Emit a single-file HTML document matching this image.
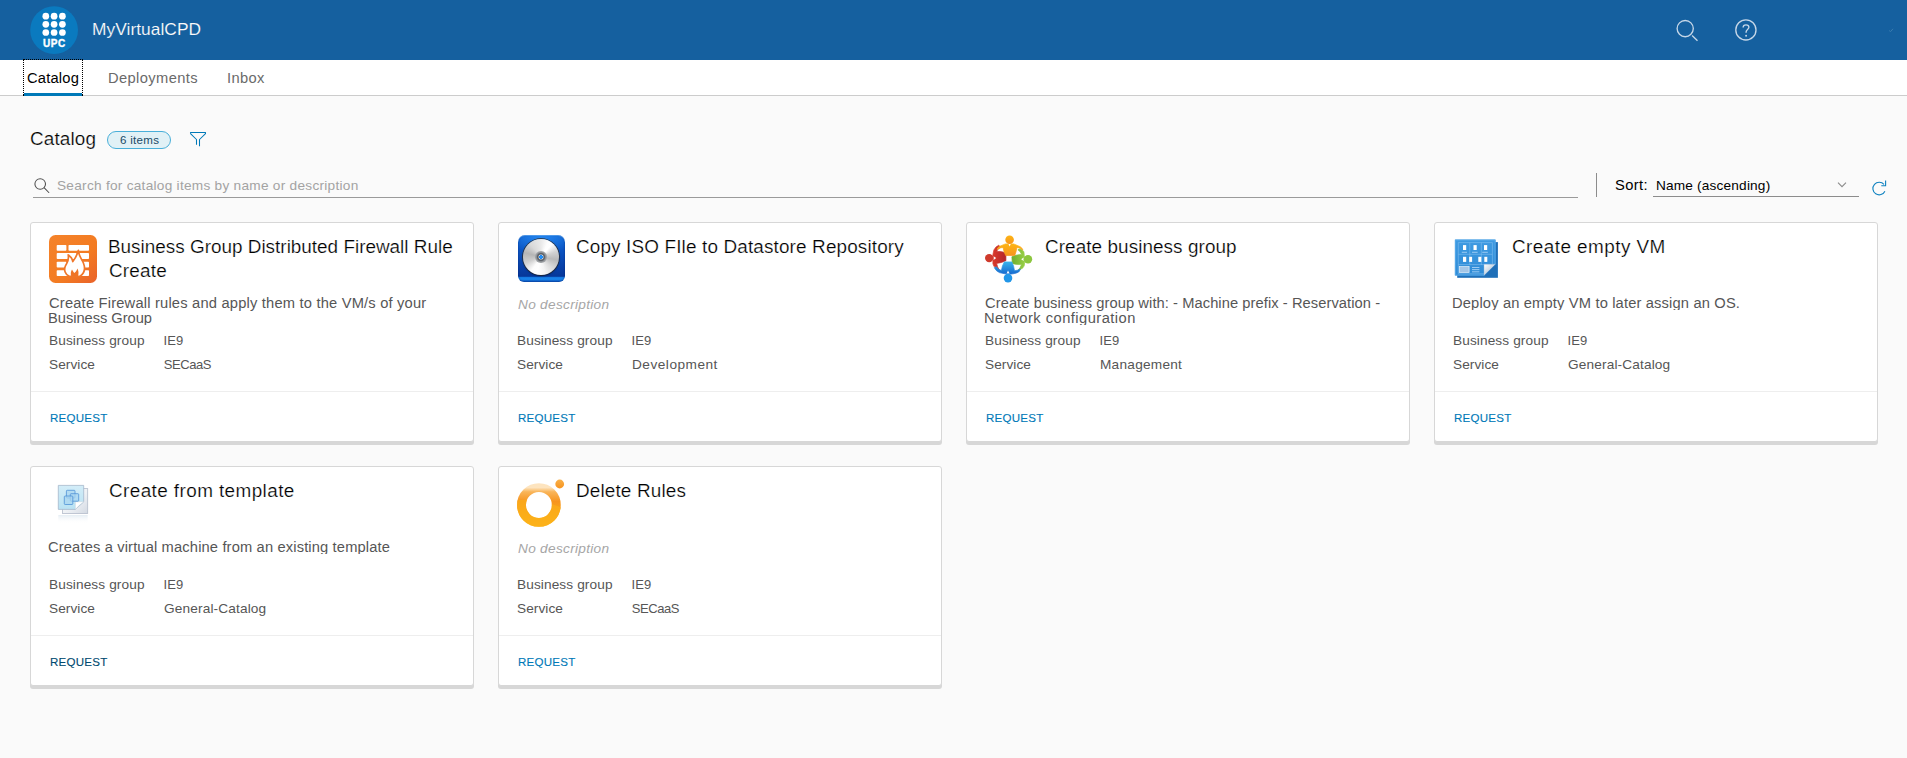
<!DOCTYPE html>
<html lang="en"><head><meta charset="utf-8"><title>MyVirtualCPD</title>
<style>
html,body{margin:0;padding:0}
body{width:1907px;height:758px;overflow:hidden;background:#fafafa;position:relative;font-family:"Liberation Sans",sans-serif}
.a{position:absolute}
.t{position:absolute;white-space:pre;line-height:1;font-family:"Liberation Sans",sans-serif}
.hdr{left:0;top:0;width:1907px;height:60px;background:#15609f}
.nav{left:0;top:60px;width:1907px;height:35px;background:#fff;border-bottom:1px solid #cccccc}
.card{position:absolute;width:442px;height:218px;background:#fff;border:1px solid #d7d7d7;border-radius:3px;box-shadow:0 3px 0 0 #d7d7d7}
.card i{position:absolute;left:0;top:168px;width:442px;height:1px;background:#eeeeee}
.clip{position:absolute;overflow:hidden}
</style></head><body>
<div class="a hdr"></div>
<div class="a nav"></div>
<!-- active tab -->
<div class="a" style="left:24px;top:93px;width:58px;height:3px;background:#0079b8"></div>
<div class="a" style="left:23px;top:59px;width:58px;height:35px;border:1px dotted #000;border-bottom:none"></div>
<div class="a" style="left:23px;top:95px;width:1px;height:1px;background:#000"></div>
<div class="a" style="left:82px;top:95px;width:1px;height:1px;background:#000"></div>
<!-- badge -->
<div class="a" style="left:107px;top:131px;width:62px;height:16px;border:1px solid #49afd9;border-radius:9px;background:#e1f1f6"></div>
<!-- search underline, divider, select underline -->
<div class="a" style="left:33px;top:197px;width:1545px;height:1px;background:#9a9a9a"></div>
<div class="a" style="left:1596px;top:173px;width:1px;height:24px;background:#8c8c8c"></div>
<div class="a" style="left:1653px;top:196px;width:206px;height:1px;background:#8c8c8c"></div>

<div class="card" style="left:30px;top:222px"><i></i></div>
<div class="card" style="left:498px;top:222px"><i></i></div>
<div class="card" style="left:966px;top:222px"><i></i></div>
<div class="card" style="left:1434px;top:222px"><i></i></div>
<div class="card" style="left:30px;top:466px"><i></i></div>
<div class="card" style="left:498px;top:466px"><i></i></div>
<div class="t" style="left:91.61px;top:21px;font-size:16.5px;letter-spacing:0.049px;color:#fafafa;-webkit-text-stroke:0.12px #15609f;transform-origin:0 0;transform:scaleX(1.05);">MyVirtualCPD</div>
<div class="t" style="left:26.57px;top:71px;font-size:14px;letter-spacing:0.192px;color:#000;transform-origin:0 0;transform:scaleX(1.05);">Catalog</div>
<div class="t" style="left:107.62px;top:71px;font-size:14px;letter-spacing:0.357px;color:#6a6a6a;transform-origin:0 0;transform:scaleX(1.05);">Deployments</div>
<div class="t" style="left:226.68px;top:71px;font-size:14px;letter-spacing:0.327px;color:#6a6a6a;transform-origin:0 0;transform:scaleX(1.05);">Inbox</div>
<div class="t" style="left:29.53px;top:130px;font-size:18px;letter-spacing:0.127px;color:#000;-webkit-text-stroke:0.22px #fafafa;transform-origin:0 0;transform:scaleX(1.05);">Catalog</div>
<div class="t" style="left:119.6px;top:134.9px;font-size:11px;letter-spacing:0.284px;color:#1a4a66;transform-origin:0 0;transform:scaleX(1.05);">6 items</div>
<div class="t" style="left:56.57px;top:178.9px;font-size:13px;letter-spacing:0.252px;color:#a3a3a3;transform-origin:0 0;transform:scaleX(1.05);">Search for catalog items by name or description</div>
<div class="t" style="left:1614.54px;top:177.9px;font-size:14px;letter-spacing:0.389px;color:#000;transform-origin:0 0;transform:scaleX(1.05);">Sort:</div>
<div class="t" style="left:1656.08px;top:178.9px;font-size:13px;letter-spacing:0.168px;color:#000;transform-origin:0 0;transform:scaleX(1.05);">Name (ascending)</div>
<div class="t" style="left:107.66px;top:238.3px;font-size:18px;letter-spacing:0.003px;color:#000;-webkit-text-stroke:0.22px #fff;transform-origin:0 0;transform:scaleX(1.05);">Business Group Distributed Firewall Rule</div>
<div class="t" style="left:108.53px;top:262.3px;font-size:18px;letter-spacing:0.201px;color:#000;-webkit-text-stroke:0.22px #fff;transform-origin:0 0;transform:scaleX(1.05);">Create</div>
<div class="t" style="left:48.67px;top:295.8px;font-size:14px;letter-spacing:0.18px;color:#565656;transform-origin:0 0;transform:scaleX(1.05);">Create Firewall rules and apply them to the VM/s of your</div>
<div class="t" style="left:47.62px;top:310.8px;font-size:14px;letter-spacing:-0.041px;color:#565656;overflow:hidden;height:14.5px;transform-origin:0 0;transform:scaleX(1.05);">Business Group</div>
<div class="t" style="left:48.68px;top:334px;font-size:13px;letter-spacing:0.101px;color:#565656;transform-origin:0 0;transform:scaleX(1.05);">Business group</div>
<div class="t" style="left:163.54px;top:334px;font-size:13px;letter-spacing:0.1px;color:#565656;">IE9</div>
<div class="t" style="left:48.57px;top:358px;font-size:13px;letter-spacing:0.068px;color:#565656;transform-origin:0 0;transform:scaleX(1.05);">Service</div>
<div class="t" style="left:163.76px;top:358px;font-size:13px;letter-spacing:-0.431px;color:#565656;">SECaaS</div>
<div class="t" style="left:49.57px;top:412.9px;font-size:11px;letter-spacing:0.219px;color:#0079b8;-webkit-text-stroke:0.12px #0079b8;transform-origin:0 0;transform:scaleX(1.05);">REQUEST</div>
<div class="t" style="left:575.73px;top:238.3px;font-size:18px;letter-spacing:0.139px;color:#000;-webkit-text-stroke:0.22px #fff;transform-origin:0 0;transform:scaleX(1.05);">Copy ISO FIle to Datastore Repository</div>
<div class="t" style="left:517.69px;top:298.1px;font-size:13px;letter-spacing:0.279px;color:#a6a6a6;font-style:italic;transform-origin:0 0;transform:scaleX(1.05);">No description</div>
<div class="t" style="left:516.68px;top:334px;font-size:13px;letter-spacing:0.101px;color:#565656;transform-origin:0 0;transform:scaleX(1.05);">Business group</div>
<div class="t" style="left:631.54px;top:334px;font-size:13px;letter-spacing:0.1px;color:#565656;">IE9</div>
<div class="t" style="left:516.57px;top:358px;font-size:13px;letter-spacing:0.068px;color:#565656;transform-origin:0 0;transform:scaleX(1.05);">Service</div>
<div class="t" style="left:631.68px;top:358px;font-size:13px;letter-spacing:0.472px;color:#565656;transform-origin:0 0;transform:scaleX(1.05);">Development</div>
<div class="t" style="left:517.57px;top:412.9px;font-size:11px;letter-spacing:0.219px;color:#0079b8;-webkit-text-stroke:0.12px #0079b8;transform-origin:0 0;transform:scaleX(1.05);">REQUEST</div>
<div class="t" style="left:1044.53px;top:238.3px;font-size:18px;letter-spacing:0.068px;color:#000;-webkit-text-stroke:0.22px #fff;transform-origin:0 0;transform:scaleX(1.05);">Create business group</div>
<div class="t" style="left:984.67px;top:295.8px;font-size:14px;letter-spacing:0.06px;color:#565656;transform-origin:0 0;transform:scaleX(1.05);">Create business group with: - Machine prefix - Reservation -</div>
<div class="t" style="left:983.62px;top:310.8px;font-size:14px;letter-spacing:0.44px;color:#565656;overflow:hidden;height:14.5px;transform-origin:0 0;transform:scaleX(1.05);">Network configuration</div>
<div class="t" style="left:984.68px;top:334px;font-size:13px;letter-spacing:0.101px;color:#565656;transform-origin:0 0;transform:scaleX(1.05);">Business group</div>
<div class="t" style="left:1099.54px;top:334px;font-size:13px;letter-spacing:0.1px;color:#565656;">IE9</div>
<div class="t" style="left:984.57px;top:358px;font-size:13px;letter-spacing:0.068px;color:#565656;transform-origin:0 0;transform:scaleX(1.05);">Service</div>
<div class="t" style="left:1099.68px;top:358px;font-size:13px;letter-spacing:0.237px;color:#565656;transform-origin:0 0;transform:scaleX(1.05);">Management</div>
<div class="t" style="left:985.57px;top:412.9px;font-size:11px;letter-spacing:0.219px;color:#0079b8;-webkit-text-stroke:0.12px #0079b8;transform-origin:0 0;transform:scaleX(1.05);">REQUEST</div>
<div class="t" style="left:1511.73px;top:238.3px;font-size:18px;letter-spacing:0.428px;color:#000;-webkit-text-stroke:0.22px #fff;transform-origin:0 0;transform:scaleX(1.05);">Create empty VM</div>
<div class="t" style="left:1451.82px;top:295.8px;font-size:14px;letter-spacing:0.144px;color:#565656;overflow:hidden;height:14.5px;transform-origin:0 0;transform:scaleX(1.05);">Deploy an empty VM to later assign an OS.</div>
<div class="t" style="left:1452.68px;top:334px;font-size:13px;letter-spacing:0.101px;color:#565656;transform-origin:0 0;transform:scaleX(1.05);">Business group</div>
<div class="t" style="left:1567.54px;top:334px;font-size:13px;letter-spacing:0.1px;color:#565656;">IE9</div>
<div class="t" style="left:1452.57px;top:358px;font-size:13px;letter-spacing:0.068px;color:#565656;transform-origin:0 0;transform:scaleX(1.05);">Service</div>
<div class="t" style="left:1567.53px;top:358px;font-size:13px;letter-spacing:0.138px;color:#565656;transform-origin:0 0;transform:scaleX(1.05);">General-Catalog</div>
<div class="t" style="left:1453.57px;top:412.9px;font-size:11px;letter-spacing:0.219px;color:#0079b8;-webkit-text-stroke:0.12px #0079b8;transform-origin:0 0;transform:scaleX(1.05);">REQUEST</div>
<div class="t" style="left:108.53px;top:482.3px;font-size:18px;letter-spacing:0.391px;color:#000;-webkit-text-stroke:0.22px #fff;transform-origin:0 0;transform:scaleX(1.05);">Create from template</div>
<div class="t" style="left:47.67px;top:539.8px;font-size:14px;letter-spacing:0.133px;color:#565656;overflow:hidden;height:14.5px;transform-origin:0 0;transform:scaleX(1.05);">Creates a virtual machine from an existing template</div>
<div class="t" style="left:48.68px;top:578px;font-size:13px;letter-spacing:0.101px;color:#565656;transform-origin:0 0;transform:scaleX(1.05);">Business group</div>
<div class="t" style="left:163.54px;top:578px;font-size:13px;letter-spacing:0.1px;color:#565656;">IE9</div>
<div class="t" style="left:48.57px;top:602px;font-size:13px;letter-spacing:0.068px;color:#565656;transform-origin:0 0;transform:scaleX(1.05);">Service</div>
<div class="t" style="left:163.53px;top:602px;font-size:13px;letter-spacing:0.138px;color:#565656;transform-origin:0 0;transform:scaleX(1.05);">General-Catalog</div>
<div class="t" style="left:49.57px;top:656.9px;font-size:11px;letter-spacing:0.219px;color:#004a70;-webkit-text-stroke:0.12px #004a70;transform-origin:0 0;transform:scaleX(1.05);">REQUEST</div>
<div class="t" style="left:575.66px;top:482.3px;font-size:18px;letter-spacing:0.142px;color:#000;-webkit-text-stroke:0.22px #fff;transform-origin:0 0;transform:scaleX(1.05);">Delete Rules</div>
<div class="t" style="left:517.69px;top:542.1px;font-size:13px;letter-spacing:0.279px;color:#a6a6a6;font-style:italic;transform-origin:0 0;transform:scaleX(1.05);">No description</div>
<div class="t" style="left:516.68px;top:578px;font-size:13px;letter-spacing:0.101px;color:#565656;transform-origin:0 0;transform:scaleX(1.05);">Business group</div>
<div class="t" style="left:631.54px;top:578px;font-size:13px;letter-spacing:0.1px;color:#565656;">IE9</div>
<div class="t" style="left:516.57px;top:602px;font-size:13px;letter-spacing:0.068px;color:#565656;transform-origin:0 0;transform:scaleX(1.05);">Service</div>
<div class="t" style="left:631.76px;top:602px;font-size:13px;letter-spacing:-0.431px;color:#565656;">SECaaS</div>
<div class="t" style="left:517.57px;top:656.9px;font-size:11px;letter-spacing:0.219px;color:#0079b8;-webkit-text-stroke:0.12px #0079b8;transform-origin:0 0;transform:scaleX(1.05);">REQUEST</div>
<!-- logo -->
<svg class="a" style="left:24px;top:0" width="60" height="60" viewBox="0 0 60 60">
<circle cx="30.1" cy="30.1" r="23.9" fill="#0a7abf"/>
<g fill="#fff">
<circle cx="21.8" cy="16.2" r="3.35"/><circle cx="30.1" cy="16.2" r="3.35"/><circle cx="38.4" cy="16.2" r="3.35"/>
<circle cx="21.8" cy="24.3" r="3.35"/><circle cx="30.1" cy="24.3" r="3.35"/><circle cx="38.4" cy="24.3" r="3.35"/>
<circle cx="21.8" cy="32.5" r="3.35"/><circle cx="30.1" cy="32.5" r="3.35"/><circle cx="38.4" cy="32.5" r="3.35"/>
</g>
<text x="30.4" y="46.7" text-anchor="middle" style="font-family:'Liberation Sans',sans-serif;font-weight:700;font-size:10px;letter-spacing:0.6px" fill="#fff" stroke="#fff" stroke-width="0.35">UPC</text>
</svg>
<!-- header search + help -->
<svg class="a" style="left:1670px;top:14px" width="100" height="34" viewBox="1670 14 100 34" fill="none" stroke="#c6d7e8" stroke-width="1.35">
<circle cx="1685.2" cy="28.6" r="8.1"/><path d="M1692.1 35.6 L1697.5 40.7"/>
<circle cx="1745.9" cy="29.9" r="10.1"/>
<path d="M1743.1 27.6 C1743.1 25.7 1744.4 24.9 1746 24.9 C1747.7 24.9 1748.9 25.9 1748.9 27.3 C1748.9 29.4 1746.1 29.6 1746.1 31.9 V32.7"/>
<circle cx="1746.1" cy="35.7" r="0.95" fill="#c6d7e8" stroke="none"/>
</svg>
<svg class="a" style="left:1886px;top:26px" width="10" height="8" viewBox="0 0 10 8" fill="none" stroke="#3a7cb0" stroke-width="1"><path d="M3.2 4.6 L4.6 5.6 L7 2.8"/></svg>
<!-- filter -->
<svg class="a" style="left:186px;top:128px" width="24" height="22" viewBox="186 128 24 22" fill="none" stroke="#0079b8" stroke-width="1.05">
<path d="M190.5 133.6 V132.5 H205.5 V133.6 L199.5 139.5 V146.2 M190.5 133.6 L196.5 139.5 V144.8" stroke-linejoin="round"/>
</svg>
<!-- search gray -->
<svg class="a" style="left:30px;top:174px" width="24" height="24" viewBox="30 174 24 24" fill="none" stroke="#4d4d4d" stroke-width="1.05">
<circle cx="40.2" cy="184" r="5.3"/><path d="M44.3 187.9 L48.8 192.5" stroke-linecap="round"/>
</svg>
<!-- select caret + refresh -->
<svg class="a" style="left:1834px;top:176px" width="60" height="24" viewBox="1834 176 60 24" fill="none">
<path d="M1838 182.6 L1842 186.7 L1846 182.6" stroke="#8a8a8a" stroke-width="1.05"/>
<path d="M1884.0 184.45 A6.3 6.3 0 1 0 1884.9 191.2" stroke="#0f82c0" stroke-width="1.1"/>
<path d="M1885.6 180.4 V185.7 H1881.3" stroke="#0f82c0" stroke-width="1.1"/>
</svg>

<!-- firewall icon -->
<svg class="a" style="left:49px;top:235px" width="48" height="48" viewBox="0 0 48 48">
<defs><linearGradient id="fw" x1="0" y1="0" x2="1" y2="1"><stop offset="0" stop-color="#f5832a"/><stop offset="0.6" stop-color="#f37b22"/><stop offset="1" stop-color="#e9622a"/></linearGradient></defs>
<rect x="0" y="0" width="48" height="48" rx="6.5" fill="url(#fw)"/>
<g fill="#fff">
<rect x="7.7" y="9.9" width="9.7" height="5.8" rx="0.8"/><rect x="19.5" y="9.9" width="20.5" height="5.8" rx="0.8"/>
<rect x="7.7" y="18.1" width="20" height="5.9" rx="0.8"/><rect x="30.3" y="18.1" width="9.7" height="5.9" rx="0.8"/>
<rect x="7.7" y="26.8" width="10" height="5.8" rx="0.8"/><rect x="19.5" y="26.8" width="20.5" height="5.8" rx="0.8"/>
<rect x="7.7" y="35.2" width="20" height="5.9" rx="0.8"/><rect x="30.3" y="35.2" width="9.7" height="5.9" rx="0.8"/>
</g>
<path d="M29.4 15.4 C29.2 20 32.6 23.6 34.4 28 C36.6 33.6 35 38.6 31 41.3 L20.2 41.3 C16.2 39.4 14.6 35 16.4 31 C17.8 28 20.4 25.6 19.2 19.9 C21.8 21.4 23.4 24 23.8 26.6 C26.2 23.4 28.2 20 29.4 15.4 Z" fill="#fff" stroke="#f0772a" stroke-width="1.7" stroke-linejoin="round"/>
<path d="M22.4 41.6 C21.2 38.7 21.9 36.2 23 34.4 C23.6 35.4 24.4 36.6 25.2 37.9 C26.6 37.2 27.8 35.6 28.3 33.5 C29.4 35.4 30.2 38.2 28.8 41.6 Z" fill="#ef7426"/>
</svg>

<!-- cd icon -->
<div class="a" style="left:517.5px;top:234.7px;width:47px;height:47.5px;border-radius:7px 7px 6px 6px;background:radial-gradient(ellipse 70% 40% at 50% 0%,rgba(45,150,255,.75),rgba(45,150,255,0) 100%),linear-gradient(180deg,#0f62cf 0%,#0b55c4 30%,#083fa6 70%,#06379a 88%,#1478e0 89.5%,#1a86ee 94%,#0a4db4 100%);box-shadow:inset 0 1px 0 rgba(120,190,255,.55), inset 0 0 2px rgba(0,20,90,.6)"></div>
<div class="a" style="left:523px;top:238.8px;width:36.2px;height:36.2px;border-radius:50%;background:conic-gradient(from 0deg,#e9e9e9 0deg,#fdfdfd 25deg,#ffffff 40deg,#d2d2d2 70deg,#b9b9b9 100deg,#dcdcdc 135deg,#f4f4f4 165deg,#ffffff 195deg,#fdfdfd 215deg,#cfcfcf 250deg,#b5b5b5 285deg,#d9d9d9 320deg,#e9e9e9 360deg);box-shadow:0 0 0 0.8px #2b2b2b, 0 1px 2px rgba(0,0,0,.5)"></div>
<div class="a" style="left:535.4px;top:251.2px;width:11.4px;height:11.4px;border-radius:50%;background:radial-gradient(circle,#2a9bff 0,#1c86f0 1.6px,#d8e6f5 2px,#6f747a 2.8px,#5c6066 3.6px,#8e9296 4.6px,#a4a7aa 5.7px)"></div>

<!-- people icon -->
<svg class="a" style="left:985px;top:235px" width="48" height="48" viewBox="0 0 48 48">
<defs>
<linearGradient id="po" x1="0" y1="0" x2="0" y2="1"><stop offset="0" stop-color="#fdb515"/><stop offset="1" stop-color="#f7941d"/></linearGradient>
<linearGradient id="pr" x1="0" y1="0" x2="1" y2="0"><stop offset="0" stop-color="#d93a2b"/><stop offset="1" stop-color="#b3242a"/></linearGradient>
<linearGradient id="pg" x1="0" y1="0" x2="1" y2="0"><stop offset="0" stop-color="#6fae2e"/><stop offset="1" stop-color="#97cf46"/></linearGradient>
<linearGradient id="pb" x1="0" y1="0" x2="0" y2="1"><stop offset="0" stop-color="#37b2ea"/><stop offset="1" stop-color="#1669cf"/></linearGradient>
</defs>
<g stroke-linejoin="round" stroke-width="0.7">
<path d="M7.9 19.5 L8.9 14.9 Q10.6 11.6 13.7 10.3 L15.6 12.2 Q12.6 13.6 11.6 16.6 Q16.5 15.8 20.9 18.0 L20.9 25.7 Q16.5 27.9 11.6 28.4 Q12.4 31.8 13.9 34.5 L11.2 33.6 Q8.4 31.4 7.9 28.8 Z" fill="url(#pr)" stroke="url(#pr)"/>
<path d="M39.3 20.5 L38.9 16.8 Q37.4 14.4 34.9 13.9 L32.9 14.8 Q35.6 16.4 36.6 19.4 Q31.4 19.6 26.9 21.7 L27.3 28.5 Q31.6 29.9 36.6 29.3 Q35.6 32.6 33 35.4 L35.6 34.3 Q38.6 33 39.3 30.6 L39.6 27.4 Z" fill="url(#pg)" stroke="url(#pg)"/>
<path d="M19.9 38.8 L14.4 37.6 Q11 36 9.3 32.7 L11.2 31.8 Q13.4 34.6 16.4 35.6 Q17 30.6 19.3 26.9 L26.9 26.9 Q28.9 30.8 29.5 35.8 Q32.4 35.4 35.4 34 L34.3 36.4 Q32.4 38 29.6 38.5 L26.1 39.1 Z" fill="url(#pb)" stroke="url(#pb)"/>
<path d="M20.4 8.9 L14.4 11.4 Q12.6 12.4 12.1 14.4 Q15 12.6 18.0 12.4 Q18.8 17 20.7 20.5 L29.8 20.5 Q31.2 16.8 32.0 12.4 Q35 12.8 38 15.1 Q37.2 12.8 35.2 11.7 L28.7 8.9 Z" fill="url(#po)" stroke="url(#po)"/>
</g>
<path d="M23.4 8.7 L24.6 11.6 L25.9 8.7 Z" fill="#fff"/>
<path d="M8.6 21.2 L11.2 23.1 L8.6 24.9 Z M38.6 22.6 L36.2 24.3 L38.6 26 Z M21.6 38.4 L23 35.6 L24.6 38.4 Z" fill="#fff"/>
<circle cx="24.6" cy="4.8" r="4.3" fill="url(#po)"/>
<circle cx="4.2" cy="23.1" r="4.2" fill="#cf3a2c"/>
<circle cx="43" cy="24.2" r="4.2" fill="#8cc63f"/>
<circle cx="23" cy="43.1" r="4.3" fill="#2196e8"/>
</svg>

<!-- blueprint icon -->
<svg class="a" style="left:1450px;top:235px" width="52" height="48" viewBox="1450 235 52 48">
<defs>
<linearGradient id="bp" x1="0" y1="0" x2="0" y2="1"><stop offset="0" stop-color="#3f9be2"/><stop offset="1" stop-color="#2f8bd6"/></linearGradient>
<linearGradient id="bf" x1="0" y1="0" x2="1" y2="1"><stop offset="0" stop-color="#ffffff"/><stop offset="0.5" stop-color="#c9d6e3"/><stop offset="0.5" stop-color="#1f6fb8"/></linearGradient>
</defs>
<rect x="1457.2" y="242.1" width="40.7" height="35.7" fill="#1f6fb8"/>
<path d="M1454.9 239.6 H1495.6 V264.2 L1484 275.6 H1454.9 Z" fill="url(#bp)"/>
<path d="M1455.4 240.1 H1495.1 V264 M1455.4 240.1 V275.1 H1484" fill="none" stroke="#58aaea" stroke-width="0.9"/>
<path d="M1458.3 242.6 H1492.4 V264 M1458.3 242.6 V273.8 H1484 M1458.3 254.3 H1492.4 M1469.8 242.6 V265 M1481.3 242.6 V265 M1458.3 264.6 H1484" fill="none" stroke="#7dbdf0" stroke-width="0.7" opacity="0.85"/>
<g fill="#fff">
<rect x="1463" y="245.1" width="3.2" height="4.9"/><rect x="1473.5" y="245.1" width="3.2" height="4.9"/><rect x="1484" y="245.1" width="3.2" height="4.9"/>
<rect x="1463" y="256.8" width="3.2" height="5.1"/><rect x="1469.2" y="256.8" width="2.9" height="5.1"/><rect x="1478.3" y="256.8" width="3" height="5.1"/><rect x="1484.3" y="256.8" width="3" height="5.1"/>
</g>
<g fill="#a7d1f5"><rect x="1461.8" y="251.8" width="5.2" height="0.9"/><rect x="1472" y="251.8" width="5.6" height="0.9"/><rect x="1482.2" y="251.8" width="5.6" height="0.9"/>
<rect x="1472" y="267" width="7.4" height="0.9"/><rect x="1472" y="269.2" width="7.4" height="0.9"/><rect x="1472" y="271.4" width="7.4" height="0.9"/></g>
<rect x="1459.3" y="266.6" width="9.8" height="5.9" fill="#a5c6e6" stroke="#e6f1fb" stroke-width="0.7"/>
<path d="M1484 264.2 H1495.6 L1484 275.6 Z" fill="url(#bf)"/>
<path d="M1484 264.2 H1495.6 L1484 275.6 Z" fill="none" stroke="#8fb7dc" stroke-width="0.4"/>
</svg>

<!-- template icon -->
<svg class="a" style="left:49px;top:479px" width="48" height="48" viewBox="49 479 48 48">
<defs>
<linearGradient id="tb" x1="0" y1="0" x2="1" y2="1"><stop offset="0" stop-color="#ffffff"/><stop offset="0.55" stop-color="#eef1f5"/><stop offset="1" stop-color="#d3d9e2"/></linearGradient>
<linearGradient id="tm" x1="0" y1="0" x2="0" y2="1"><stop offset="0" stop-color="#d3edf8"/><stop offset="1" stop-color="#b9e2f3"/></linearGradient>
<linearGradient id="tf" x1="0" y1="0" x2="1" y2="1"><stop offset="0" stop-color="#ffffff"/><stop offset="0.5" stop-color="#e4e8ee"/><stop offset="0.52" stop-color="#d5dae3" stop-opacity="0"/></linearGradient>
<linearGradient id="tr" x1="0" y1="0" x2="0" y2="1"><stop offset="0" stop-color="#dfe9f1" stop-opacity="0.8"/><stop offset="1" stop-color="#ffffff" stop-opacity="0"/></linearGradient>
</defs>
<rect x="62.4" y="488.6" width="25.3" height="25" fill="url(#tb)" stroke="#b4bccb" stroke-width="0.8"/>
<path d="M58.3 485.4 H83.7 V501.8 L75.4 509.4 H58.3 Z" fill="url(#tm)" stroke="#a4b7cb" stroke-width="0.8"/>
<path d="M75.4 501.8 H83.7 Q79 505 75.4 509.4 Z" fill="#fff" stroke="#c5ccd6" stroke-width="0.4"/>
<g fill="#a9d6f0" fill-opacity="0.75" stroke="#4f92d6" stroke-width="0.8">
<rect x="66.4" y="490.3" width="8.6" height="7.7" rx="0.8"/>
<rect x="70.3" y="493.7" width="8.4" height="7.5" rx="0.8"/>
<rect x="64.3" y="496" width="8.5" height="8.5" rx="0.8"/>
</g>
<rect x="58.3" y="515" width="29.4" height="8.5" fill="url(#tr)"/>
</svg>
<!-- ring icon -->
<svg class="a" style="left:515px;top:477px" width="52" height="52" viewBox="515 477 52 52">
<defs>
<linearGradient id="rg" x1="0" y1="0" x2="0" y2="1"><stop offset="0" stop-color="#fde4bf"/><stop offset="0.12" stop-color="#f9b55a"/><stop offset="0.4" stop-color="#f7941e"/><stop offset="0.75" stop-color="#fbaa19"/><stop offset="1" stop-color="#fdbb18"/></linearGradient>
<linearGradient id="rd" x1="0" y1="0" x2="0" y2="1"><stop offset="0" stop-color="#f9b04a"/><stop offset="1" stop-color="#f7941e"/></linearGradient>
<clipPath id="rc"><path d="M515 500.5 Q540 496.5 569 511 V540 H515 Z"/></clipPath>
</defs>
<circle cx="538.9" cy="505" r="17.4" fill="none" stroke="url(#rg)" stroke-width="8.9"/>
<circle cx="538.9" cy="505" r="17.4" fill="none" stroke="#fbad1a" stroke-width="8.9" clip-path="url(#rc)" opacity="0.75"/>
<circle cx="559.7" cy="484" r="4.4" fill="url(#rd)"/>
</svg>

</body></html>
